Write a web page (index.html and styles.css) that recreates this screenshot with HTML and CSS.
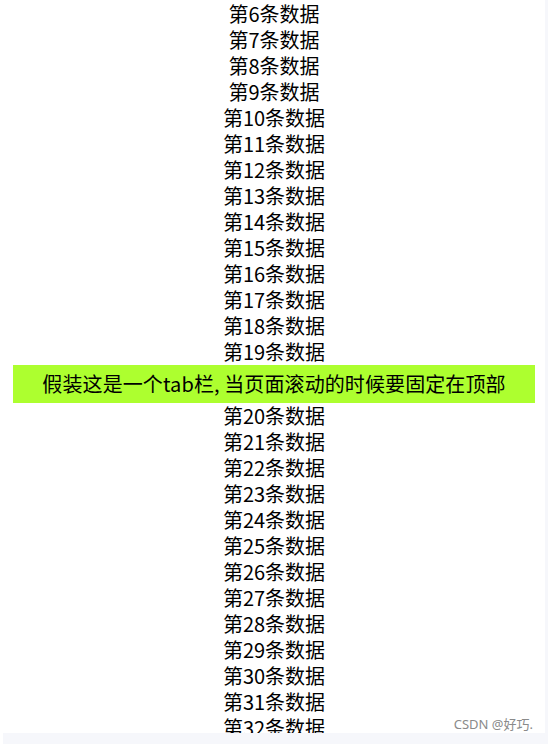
FILE: index.html
```html
<!DOCTYPE html>
<html lang="zh-CN">
<head>
<meta charset="utf-8">
<title>tab</title>
<link rel="stylesheet" href="styles.css">
</head>
<body>
<div class="page">
  <div class="viewport">
    <div class="list">
      <div class="item">第6条数据</div>
      <div class="item">第7条数据</div>
      <div class="item">第8条数据</div>
      <div class="item">第9条数据</div>
      <div class="item">第10条数据</div>
      <div class="item">第11条数据</div>
      <div class="item">第12条数据</div>
      <div class="item">第13条数据</div>
      <div class="item">第14条数据</div>
      <div class="item">第15条数据</div>
      <div class="item">第16条数据</div>
      <div class="item">第17条数据</div>
      <div class="item">第18条数据</div>
      <div class="item">第19条数据</div>
      <div class="tabbar">假装这是一个tab栏, 当页面滚动的时候要固定在顶部</div>
      <div class="item">第20条数据</div>
      <div class="item">第21条数据</div>
      <div class="item">第22条数据</div>
      <div class="item">第23条数据</div>
      <div class="item">第24条数据</div>
      <div class="item">第25条数据</div>
      <div class="item">第26条数据</div>
      <div class="item">第27条数据</div>
      <div class="item">第28条数据</div>
      <div class="item">第29条数据</div>
      <div class="item">第30条数据</div>
      <div class="item">第31条数据</div>
      <div class="item">第32条数据</div>
    </div>
    <div class="vscroll"></div>
    <div class="watermark">CSDN @好巧.</div>
  </div>
  <div class="hscroll"></div>
</div>
</body>
</html>
```
FILE: styles.css
```css
html, body {
  margin: 0;
  padding: 0;
  background: #ffffff;
}
body {
  font-family: "Noto Sans CJK SC", "Noto Sans", sans-serif;
  color: #000;
}
.page {
  width: 548px;
  height: 744px;
  overflow: hidden;
  display: flex;
  flex-direction: column;
  background: #ffffff;
}
.viewport {
  position: relative;
  height: 733px;
  flex: none;
  overflow: hidden;
}
.list {
  padding-top: 1px;
}
.item {
  font-size: 20px;
  line-height: 26px;
  height: 26px;
  text-align: center;
  white-space: nowrap;
}
.tabbar {
  margin: 0 13px;
  height: 38px;
  line-height: 38px;
  background: #adff2f;
  font-size: 20px;
  letter-spacing: 0.1px;
  text-align: center;
  white-space: nowrap;
}
.vscroll {
  position: absolute;
  top: 0;
  right: 0;
  width: 3px;
  height: 100%;
  background: #f6f7fb;
}
.hscroll {
  flex: 1;
  margin-left: 3px;
  background: #f6f7fb;
}
.watermark {
  position: absolute;
  right: 15px;
  bottom: 1px;
  font-family: "Noto Sans", "Noto Sans CJK SC", sans-serif;
  font-size: 13px;
  line-height: 16px;
  color: #8a8a8a;
}
```
